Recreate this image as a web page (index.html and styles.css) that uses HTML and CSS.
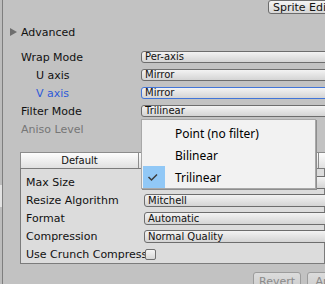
FILE: index.html
```html
<!DOCTYPE html>
<html lang="en">
<head>
  <meta charset="UTF-8" />
  <title>Texture Import Settings</title>
  <link rel="stylesheet" href="styles.css">
</head>
<body>
<div class="window">
  <div class="edge"><div class="edge-light"></div></div>

  <div class="inspector">
    <div class="toolbar">
      <button class="btn-mini">Sprite Editor</button>
    </div>

    <!-- ADVANCED -->
    <div class="foldout"><span class="arrow"></span>Advanced</div>
    <div class="rows">
      <div class="row"><span class="label">Wrap Mode</span><div class="popup">Per-axis</div></div>
      <div class="row sub"><span class="label">U axis</span><div class="popup">Mirror</div></div>
      <div class="row sub focus"><span class="label">V axis</span><div class="popup">Mirror</div></div>
      <div class="row"><span class="label">Filter Mode</span><div class="popup">Trilinear</div></div>
      <div class="row disabled"><span class="label">Aniso Level</span></div>
    </div>

    <!-- PLATFORMS -->
    <div class="platforms">
      <div class="tabs">
        <div class="tab active">Default</div>
        <div class="tab wide"></div>
        <div class="tab"></div>
      </div>
      <div class="panel">
        <div class="row"><span class="label">Max Size</span><div class="popup big">2048</div></div>
        <div class="row"><span class="label">Resize Algorithm</span><div class="popup big">Mitchell</div></div>
        <div class="row"><span class="label">Format</span><div class="popup big">Automatic</div></div>
        <div class="row"><span class="label">Compression</span><div class="popup big">Normal Quality</div></div>
        <div class="row"><span class="label clip">Use Crunch Compression</span><span class="checkbox"></span></div>
      </div>
    </div>

    <div class="actions">
      <button class="btn-action">Revert</button>
      <button class="btn-action">Apply</button>
    </div>

    <!-- FILTER MODE MENU -->
    <div class="menu">
      <div class="item"><span class="check"></span>Point (no filter)</div>
      <div class="item"><span class="check"></span>Bilinear</div>
      <div class="item"><span class="check on">
        <svg width="22" height="22" viewBox="0 0 22 22"><path d="M5.5 11 L8.5 14 L14 8.5" fill="none" stroke="#3c3c3c" stroke-width="1.5"/></svg>
      </span>Trilinear</div>
    </div>
  </div>
</div>
</body>
</html>
```

FILE: styles.css
```css
* {
  box-sizing: border-box;
}
body {
  margin: 0;
  width: 325px;
  height: 284px;
  overflow: hidden;
  background-color: #c2c2c2;
  font-family: 'DejaVu Sans', Verdana, sans-serif;
  font-size: 11px;
  color: #111;
}
.window {
  display: flex;
  height: 284px;
}
.edge {
  width: 3px;
  background: #bcbcbc;
  border-right: 1px solid #7e7e7e;
  display: flex;
  flex-direction: column;
}
.edge-light {
  margin-top: 185px;
  height: 22px;
  background: #e2e2e2;
}
.inspector {
  position: relative;
  flex: 1;
  overflow: hidden;
}
.toolbar {
  display: flex;
  height: 14px;
  padding-left: 265px;
}
.btn-mini {
  flex: 0 0 80px;
  height: 14px;
  padding: 0 0 0 4px;
  border: 1px solid #6b6b6b;
  border-radius: 3px;
  background: linear-gradient(#f4f4f4, #d6d6d6);
  font-family: inherit;
  font-size: 11px;
  line-height: 11px;
  color: #111;
  text-align: left;
  white-space: nowrap;
}
.foldout {
  display: flex;
  align-items: center;
  gap: 4px;
  height: 18px;
  margin-top: 9px;
  padding-left: 7px;
}
.arrow {
  width: 0;
  height: 0;
  border-left: 7px solid #6e6e6e;
  border-top: 4.5px solid transparent;
  border-bottom: 4.5px solid transparent;
}
.rows {
  margin-top: 7px;
}
.row {
  display: flex;
  align-items: center;
  height: 18px;
  padding-left: 18px;
}
.label {
  flex: 0 0 120px;
  white-space: nowrap;
}
.row.sub {
  padding-left: 33px;
}
.row.sub .label {
  flex-basis: 105px;
}
.row.focus .label {
  color: #2f5bd8;
}
.row.disabled .label {
  color: #767676;
}
.popup {
  flex: 0 0 200px;
  height: 12px;
  padding-left: 3px;
  border: 1px solid #6d6d6d;
  border-radius: 3px;
  background: linear-gradient(#f3f3f3, #d4d4d4);
  font-size: 10px;
  line-height: 10px;
  white-space: nowrap;
}
.row.focus .popup {
  border-color: #4275d8;
}
.popup.big {
  height: 13px;
  line-height: 11px;
}
.platforms {
  margin-top: 14px;
  margin-left: 17px;
}
.tabs {
  display: flex;
  height: 16px;
}
.tab {
  flex: 0 0 40px;
  border: 1px solid #8c8c8c;
  border-bottom: none;
  background: linear-gradient(#fdfdfd, #e0e0e0);
  font-size: 10px;
  line-height: 15px;
  text-align: center;
}
.tab + .tab {
  border-left: none;
}
.tab.active {
  flex-basis: 119px;
}
.tab.wide {
  flex-basis: 180px;
}
.panel {
  height: 96px;
  padding: 4px 0 0 5px;
  border: 1px solid #7b7b7b;
  background: #dcdcdc;
}
.panel .row {
  padding-left: 0;
}
.panel .label {
  flex-basis: 118px;
}
.label.clip {
  flex-basis: 120px;
  overflow: hidden;
}
.checkbox {
  flex: 0 0 11px;
  height: 11px;
  margin-left: -1px;
  border: 1px solid #707070;
  border-radius: 2px;
  background: linear-gradient(#f4f4f4, #d8d8d8);
}
.actions {
  display: flex;
  gap: 6px;
  margin-top: 8px;
  padding-left: 250px;
}
.btn-action {
  flex: 0 0 48px;
  height: 18px;
  padding: 0;
  border: 1px solid #9c9c9c;
  border-radius: 3px;
  background: linear-gradient(#dcdcdc, #cdcdcd);
  font-family: inherit;
  font-size: 11px;
  color: #8a8a8a;
}
.menu {
  position: absolute;
  left: 138px;
  top: 119px;
  width: 175px;
  padding: 2px 0 0 1px;
  border: 1px solid #a8a8a8;
  background: #f2f2f2;
  box-shadow: 1px 1px 0 #8e8e8e;
  font-family: 'Noto Sans', sans-serif;
  font-size: 12px;
  color: #000;
}
.item {
  display: flex;
  align-items: center;
  gap: 10px;
  height: 22px;
}
.check {
  flex: 0 0 22px;
  height: 22px;
}
.check.on {
  background: #91c8f6;
}
.check svg {
  display: block;
}
```
